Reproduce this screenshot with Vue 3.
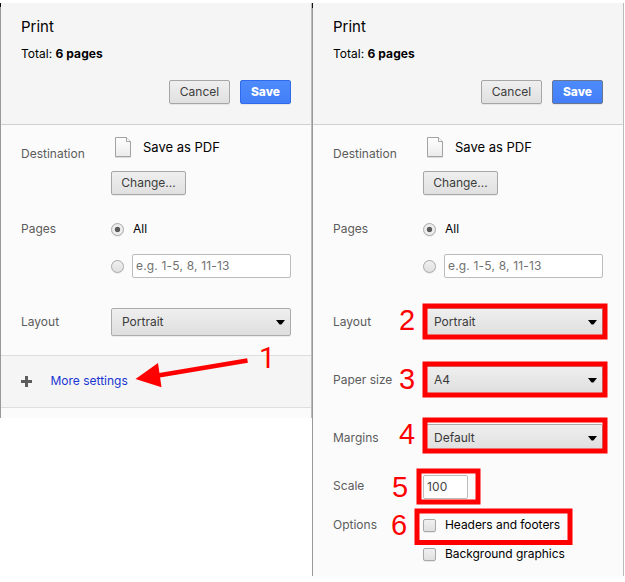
<script setup>
const panels = [
  { name: 'basic', selects: [{ label: 'Layout', value: 'Portrait' }] },
  {
    name: 'full',
    selects: [
      { label: 'Layout', value: 'Portrait' },
      { label: 'Paper size', value: 'A4' },
      { label: 'Margins', value: 'Default' },
    ],
  },
]
const options = ['Headers and footers', 'Background graphics']
const frames = [
  { x: 425, y: 306, w: 180, h: 31 },
  { x: 425, y: 364, w: 180, h: 31 },
  { x: 425, y: 420, w: 180, h: 31 },
  { x: 419, y: 471, w: 59, h: 31 },
  { x: 417, y: 511, w: 153, h: 31.5 },
]
const steps = [
  { n: 1, x: 259, y: 368 },
  { n: 2, x: 399, y: 330 },
  { n: 3, x: 399, y: 389 },
  { n: 4, x: 399, y: 443.5 },
  { n: 5, x: 392, y: 496.5 },
  { n: 6, x: 391, y: 535 },
]
</script>

<template>
  <main class="stage">
    <section v-for="p in panels" :key="p.name" class="panel" :class="p.name">
      <header class="head">
        <h1>Print</h1>
        <p class="total">Total: <b>6 pages</b></p>
        <div class="actions">
          <button class="btn cancel">Cancel</button>
          <button class="btn save">Save</button>
        </div>
      </header>

      <div class="row destination">
        <span class="label">Destination</span>
        <div>
          <div class="dest">
            <svg class="doc" width="18" height="22" viewBox="0 0 18 22">
              <defs>
                <linearGradient :id="'paper-' + p.name" x1="0" y1="0" x2="0" y2="1">
                  <stop offset="0" stop-color="#fff" />
                  <stop offset="1" stop-color="#ebebeb" />
                </linearGradient>
              </defs>
              <path d="M1.5 1.5H12.5L16.5 5.5V20.5H1.5Z" :fill="`url(#paper-${p.name})`" stroke="#a2a2a2" />
              <path d="M12.5 1.5V5.5H16.5" fill="#fff" stroke="#a2a2a2" />
              <path d="M1 21.5H17" stroke="#ddd" />
            </svg>
            <span class="pdf">Save as PDF</span>
          </div>
          <button class="btn change">Change...</button>
        </div>
      </div>

      <div class="row pages">
        <span class="label">Pages</span>
        <div class="radios">
          <div class="choice"><i class="radio on"></i><span>All</span></div>
          <div class="choice range"><i class="radio"></i><span class="field">e.g. 1-5, 8, 11-13</span></div>
        </div>
      </div>

      <div v-for="s in p.selects" :key="s.label" class="row pick">
        <span class="label">{{ s.label }}</span>
        <div class="select">
          <span>{{ s.value }}</span>
          <svg width="9" height="5" viewBox="0 0 9 5"><path d="M0 0H9L5.4 4.6H3.6Z" fill="#000" /></svg>
        </div>
      </div>

      <div v-if="p.name === 'basic'" class="more">
        <svg width="11" height="11" viewBox="0 0 11 11"><path d="M4 0H7V4H11V7H7V11H4V7H0V4H4Z" fill="#5d5d5d" /></svg>
        <a>More settings</a>
      </div>

      <template v-else>
        <div class="row scale">
          <span class="label">Scale</span>
          <span class="field number">100</span>
        </div>
        <div class="row opts">
          <span class="label">Options</span>
          <div class="checks">
            <div v-for="o in options" :key="o" class="choice"><i class="check"></i><span>{{ o }}</span></div>
          </div>
        </div>
      </template>
    </section>

    <svg class="notes" width="625" height="582" viewBox="0 0 625 582">
      <path d="M0.5 3V7M312.5 3V8" stroke="#111" />
      <rect v-for="f in frames" :key="f.y" :x="f.x" :y="f.y" :width="f.w" :height="f.h" fill="none" stroke="#f00" stroke-width="5" />
      <path d="M247.5 360.5L158 375.5" stroke="#f00" stroke-width="4.6" />
      <path d="M135.5 379L158 363L161.5 387.3Z" fill="#f00" />
      <text v-for="s in steps" :key="s.n" :x="s.x" :y="s.y" :class="{ one: s.n === 1 }">{{ s.n }}</text>
    </svg>
  </main>
</template>

<style>
body {
  background: #fff;
}
</style>

<style scoped>
.stage {
  position: relative;
  display: flex;
  align-items: flex-start;
  width: 625px;
  height: 582px;
  padding-top: 3px;
  box-sizing: border-box;
  overflow: hidden;
  font: 12px/16px Inter, sans-serif;
  color: #000;
}
.panel {
  box-sizing: border-box;
  width: 312px;
  background: #fbfbfb;
  border-left: 1px solid #999;
  border-right: 1px solid #bbb;
}
.basic { height: 415px; }
.full { height: 573px; }
.head {
  box-sizing: border-box;
  height: 122px;
  padding: 14px 20px 0;
  background: #f5f5f5;
  border-bottom: 1px solid #d0d0d0;
}
h1 {
  margin: 0;
  font-size: 15px;
  font-weight: 400;
  line-height: 20px;
}
.total {
  margin: 9px 0 0;
}
.total b { font-weight: 700; letter-spacing: 0.1px; }
.actions {
  display: flex;
  justify-content: flex-end;
  gap: 10px;
  margin-top: 18px;
}
.btn {
  box-sizing: border-box;
  display: flex;
  justify-content: center;
  height: 24px;
  padding: 0;
  border: 1px solid #a6a6a6;
  border-radius: 2px;
  background: linear-gradient(#efefef, #e0e0e0);
  box-shadow: 0 1px 0 rgba(0, 0, 0, 0.06);
  color: #3c3c3c;
  font: 12px/21px Inter, sans-serif;
}
.cancel { width: 61px; }
.save {
  width: 51px;
  border-color: #2f6bea;
  background: linear-gradient(#4d8bfb, #437ef8);
  color: #fff;
  font-weight: 800;
}
.full .save { border-color: #6a7690; }
.change { width: 75px; }
.row {
  display: grid;
  grid-template-columns: 90px 180px;
  padding-left: 20px;
}
.label { color: #5c5c5c; }
.destination { height: 82px; padding-top: 11px; }
.destination .label { padding-top: 10px; }
.dest {
  display: flex;
  align-items: center;
  gap: 11px;
  height: 22px;
  padding-left: 3px;
  margin-bottom: 13px;
}
.pdf { font-size: 13px; }
.pages { height: 79px; margin-top: -8px; padding-top: 11px; }
.choice {
  display: flex;
  align-items: center;
  gap: 9px;
}
.range {
  gap: 8px;
  margin-top: 17px;
}
.radio,
.check {
  box-sizing: border-box;
  width: 13px;
  height: 13px;
  border: 1px solid #a8a8a8;
  background: linear-gradient(#f0f0f0, #e0e0e0);
  box-shadow: 0 1px 0 rgba(0, 0, 0, 0.07);
}
.radio { border-radius: 50%; }
.range .radio { margin-top: 1px; }
.check { border-radius: 2px; }
.on { background: radial-gradient(circle, #5c5c5c 2.3px, #ececec 3.1px); }
.field {
  box-sizing: border-box;
  width: 159px;
  height: 24px;
  padding-left: 3px;
  border: 1px solid #bcbcbc;
  border-radius: 2px;
  background: #fff;
  color: #717171;
  letter-spacing: 0.18px;
  line-height: 21px;
}
.pick {
  height: 58px;
  padding-top: 8px;
  box-sizing: border-box;
}
.pick .label { padding-top: 6px; }
.select {
  box-sizing: border-box;
  display: flex;
  align-items: center;
  justify-content: space-between;
  height: 28px;
  padding: 0 5px 0 10px;
  border: 1px solid #acacac;
  border-radius: 2px;
  background: linear-gradient(#efefef, #dedede);
  box-shadow: 0 1px 0 rgba(0, 0, 0, 0.06);
  color: #3a3a3a;
}
.more {
  display: flex;
  align-items: center;
  gap: 18.5px;
  height: 51px;
  margin-top: -3px;
  padding-left: 20px;
  background: #f5f5f5;
  border-top: 1px solid #dedede;
  border-bottom: 1px solid #dedede;
}
.more a { color: #1a35d2; margin-top: -2px; }
.scale { height: 38px; }
.scale .label { padding-top: 4px; }
.number {
  width: 45px;
  margin: 1px 0 0;
  color: #444;
}
.opts { padding-top: 5px; }
.checks .choice + .choice { margin-top: 13px; }
.checks span { letter-spacing: -0.05px; }
.notes {
  position: absolute;
  left: 0;
  top: 0;
}
.notes text {
  font: 29px "Liberation Sans", sans-serif;
  fill: #f00;
}
.notes .one { font-family: Roboto, sans-serif; }
</style>
